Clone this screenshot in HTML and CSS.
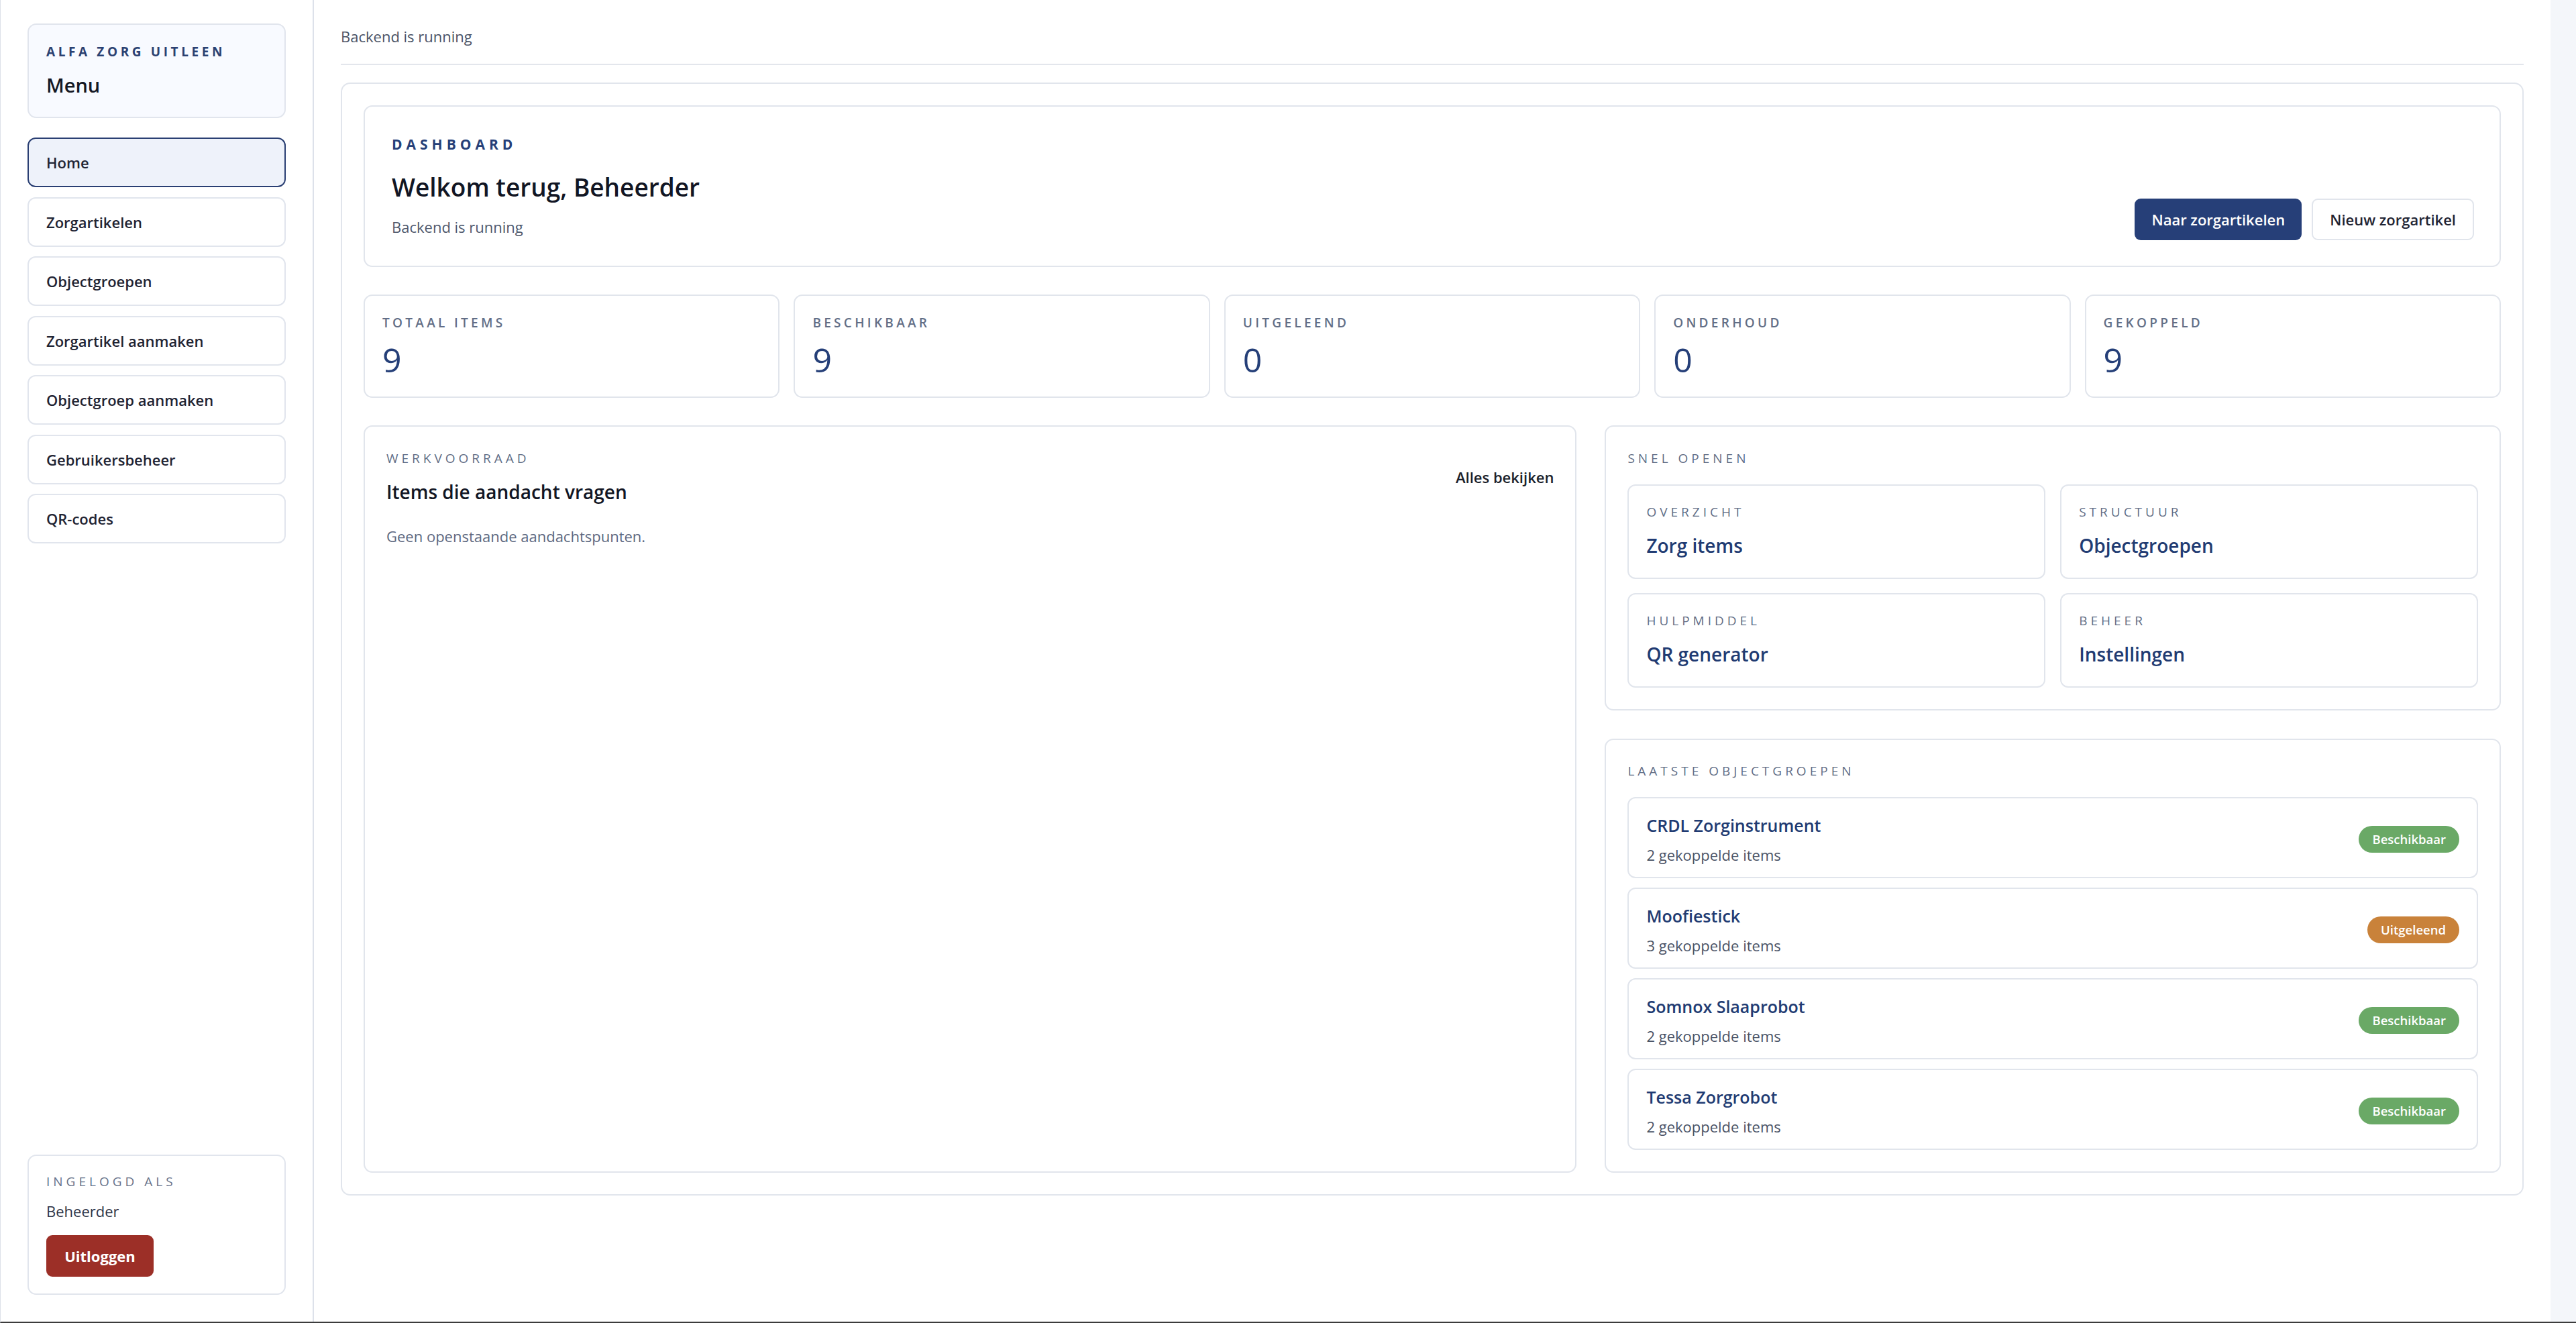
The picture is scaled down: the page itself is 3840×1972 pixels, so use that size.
FILE: index.html
```html
<!DOCTYPE html>
<html lang="nl">
<head>
    <meta charset="UTF-8">
    <meta name="viewport" content="width=device-width, initial-scale=1.0">
    <title>Alfa Zorg Uitleen - Dashboard</title>
    <link rel="stylesheet" href="styles.css">
</head>
<body>
    <div class="app">
        <aside class="sidebar">
            <div class="brand">
                <div class="brand-label">ALFA ZORG UITLEEN</div>
                <div class="brand-title">Menu</div>
            </div>

            <nav class="nav">
                <a class="nav-item active" href="#">Home</a>
                <a class="nav-item" href="#">Zorgartikelen</a>
                <a class="nav-item" href="#">Objectgroepen</a>
                <a class="nav-item" href="#">Zorgartikel aanmaken</a>
                <a class="nav-item" href="#">Objectgroep aanmaken</a>
                <a class="nav-item" href="#">Gebruikersbeheer</a>
                <a class="nav-item" href="#">QR-codes</a>
            </nav>

            <div class="user-box">
                <div class="user-label">INGELOGD ALS</div>
                <div class="user-name">Beheerder</div>
                <button class="btn-logout">Uitloggen</button>
            </div>
        </aside>

        <main class="main">
            <div class="topbar">Backend is running</div>

            <div class="panel">
                <section class="hero card">
                    <div class="hero-text">
                        <div class="eyebrow">DASHBOARD</div>
                        <h1>Welkom terug, Beheerder</h1>
                        <p class="muted">Backend is running</p>
                    </div>
                    <div class="hero-actions">
                        <button class="btn btn-primary">Naar zorgartikelen</button>
                        <button class="btn btn-light">Nieuw zorgartikel</button>
                    </div>
                </section>

                <section class="stats">
                    <div class="stat card">
                        <div class="label">TOTAAL ITEMS</div>
                        <div class="stat-value">9</div>
                    </div>
                    <div class="stat card">
                        <div class="label">BESCHIKBAAR</div>
                        <div class="stat-value">9</div>
                    </div>
                    <div class="stat card">
                        <div class="label">UITGELEEND</div>
                        <div class="stat-value">0</div>
                    </div>
                    <div class="stat card">
                        <div class="label">ONDERHOUD</div>
                        <div class="stat-value">0</div>
                    </div>
                    <div class="stat card">
                        <div class="label">GEKOPPELD</div>
                        <div class="stat-value">9</div>
                    </div>
                </section>

                <section class="lower">
                    <div class="work card">
                        <div class="work-head">
                            <div>
                                <div class="label">WERKVOORRAAD</div>
                                <h2>Items die aandacht vragen</h2>
                            </div>
                            <a class="link" href="#">Alles bekijken</a>
                        </div>
                        <p class="muted empty">Geen openstaande aandachtspunten.</p>
                    </div>

                    <div class="side-col">
                        <div class="quick card">
                            <div class="label">SNEL OPENEN</div>
                            <div class="quick-grid">
                                <a class="quick-item" href="#">
                                    <div class="label">OVERZICHT</div>
                                    <div class="quick-title">Zorg items</div>
                                </a>
                                <a class="quick-item" href="#">
                                    <div class="label">STRUCTUUR</div>
                                    <div class="quick-title">Objectgroepen</div>
                                </a>
                                <a class="quick-item" href="#">
                                    <div class="label">HULPMIDDEL</div>
                                    <div class="quick-title">QR generator</div>
                                </a>
                                <a class="quick-item" href="#">
                                    <div class="label">BEHEER</div>
                                    <div class="quick-title">Instellingen</div>
                                </a>
                            </div>
                        </div>

                        <div class="groups card">
                            <div class="label">LAATSTE OBJECTGROEPEN</div>
                            <div class="group-list" id="group-list"></div>
                        </div>
                    </div>
                </section>
            </div>
        </main>

        <div class="scroll-track"></div>
    </div>

    <script>
        const groups = [
            { name: "CRDL Zorginstrument", items: 2, status: "Beschikbaar" },
            { name: "Moofiestick", items: 3, status: "Uitgeleend" },
            { name: "Somnox Slaaprobot", items: 2, status: "Beschikbaar" },
            { name: "Tessa Zorgrobot", items: 2, status: "Beschikbaar" }
        ]

        const renderGroups = () => {
            const list = document.getElementById("group-list")
            list.innerHTML = ""
            groups.forEach(group => {
                let row = document.createElement("div")
                row.classList.add("group-item")
                let badgeClass = group.status === "Uitgeleend" ? "badge-out" : "badge-ok"
                row.innerHTML = `
                    <div>
                        <div class="group-name">${group.name}</div>
                        <div class="group-count">${group.items} gekoppelde items</div>
                    </div>
                    <span class="badge ${badgeClass}">${group.status}</span>
                `
                list.appendChild(row)
            })
        }

        renderGroups()
    </script>
</body>
</html>
```

FILE: styles.css
```css
* {
  box-sizing: border-box;
}
body {
  margin: 0;
  font-family: "Open Sans", "Noto Sans", sans-serif;
  color: #1b1f2b;
  background-color: #fff;
  overflow: hidden;
}
a {
  color: inherit;
  text-decoration: none;
}
h1, h2, p {
  margin: 0;
}
button {
  font-family: inherit;
  cursor: pointer;
}

.app {
  display: flex;
  height: 100vh;
  border-left: 1px solid #dde1e8;
  border-bottom: 2px solid #3c3c3c;
}

/* sidebar */
.sidebar {
  width: 467px;
  flex-shrink: 0;
  display: flex;
  flex-direction: column;
  padding: 35px 40px 40px;
  border-right: 2px solid #dde1ea;
}
.brand {
  background-color: #f8faff;
  border: 2px solid #e1e5ed;
  border-radius: 13px;
  padding: 26px 26px 27px;
}
.brand-label {
  font-size: 19px;
  line-height: 28px;
  font-weight: 700;
  letter-spacing: 4.6px;
  color: #2b4171;
}
.brand-title {
  margin-top: 16px;
  font-size: 29px;
  line-height: 40px;
  font-weight: 600;
  color: #141824;
}
.nav {
  display: flex;
  flex-direction: column;
  gap: 14.5px;
  margin-top: 29px;
}
.nav-item {
  display: block;
  padding: 20px 26px;
  font-size: 22px;
  line-height: 30px;
  font-weight: 600;
  color: #1f2433;
  border: 2px solid #e1e5ed;
  border-radius: 12px;
  background-color: #fff;
}
.nav-item.active {
  background-color: #eef2fa;
  border-color: #2a3f73;
}
.user-box {
  margin-top: auto;
  border: 2px solid #e1e5ed;
  border-radius: 13px;
  padding: 25px 26px 25px;
}
.user-label {
  font-size: 19px;
  line-height: 26px;
  letter-spacing: 5px;
  color: #66728a;
}
.user-name {
  margin-top: 16px;
  font-size: 22px;
  line-height: 30px;
  color: #2f3548;
}
.btn-logout {
  margin-top: 21px;
  height: 62px;
  width: 160px;
  border: none;
  border-radius: 9px;
  background-color: #9c2f27;
  color: #fff;
  font-size: 22px;
  font-weight: 700;
}

/* main area */
.main {
  flex: 1;
  min-width: 0;
  padding: 0 40px;
}
.topbar {
  padding: 40px 0 27px;
  font-size: 22px;
  line-height: 28px;
  color: #4a5366;
  border-bottom: 2px solid #e3e6ec;
}
.panel {
  margin-top: 26px;
  border: 2px solid #e1e5ec;
  border-radius: 14px;
  padding: 32px;
  display: flex;
  flex-direction: column;
  gap: 41px;
}
.card {
  border: 2px solid #e1e5ec;
  border-radius: 13px;
  background-color: #fff;
}
.label {
  font-size: 19px;
  line-height: 26px;
  font-weight: 500;
  letter-spacing: 5px;
  color: #626e86;
}
.muted {
  font-size: 22px;
  line-height: 28px;
  color: #4e586c;
}

.hero {
  display: flex;
  justify-content: space-between;
  align-items: flex-end;
  padding: 41px 38px 38px 40px;
}
.hero-text {
  padding-bottom: 6px;
}
.eyebrow {
  font-size: 21px;
  line-height: 30px;
  font-weight: 700;
  letter-spacing: 6px;
  color: #263f78;
}
.hero h1 {
  margin-top: 25px;
  font-size: 37px;
  line-height: 48px;
  font-weight: 600;
  color: #121624;
}
.hero .muted {
  margin-top: 21px;
}
.hero-actions {
  display: flex;
  gap: 15px;
}
.btn {
  height: 62px;
  padding: 0 25px;
  font-size: 22px;
  font-weight: 600;
  border-radius: 9px;
}
.btn-primary {
  background-color: #263f78;
  border: none;
  color: #fff;
}
.btn-light {
  background-color: #fff;
  border: 2px solid #e1e5ec;
  color: #1f2433;
}

.stats {
  display: grid;
  grid-template-columns: repeat(5, 1fr);
  gap: 21px;
}
.stat {
  padding: 27px 26px 25px;
}
.stat .label {
  font-weight: 600;
  letter-spacing: 4.3px;
}
.stat-value {
  margin-top: 12px;
  font-size: 50px;
  line-height: 60px;
  font-weight: 500;
  color: #253f78;
}

.lower {
  display: grid;
  grid-template-columns: 1.354fr 1fr;
  gap: 42px;
  align-items: stretch;
}
.work {
  padding: 34px 32px;
}
.work-head {
  display: flex;
  justify-content: space-between;
  align-items: center;
}
.work h2 {
  margin-top: 19px;
  font-size: 28px;
  line-height: 36px;
  font-weight: 600;
  color: #121624;
}
.link {
  font-size: 22px;
  line-height: 30px;
  font-weight: 600;
  color: #1b1f2b;
}
.empty {
  margin-top: 34px;
  color: #5d6880;
}

.side-col {
  display: flex;
  flex-direction: column;
  gap: 42px;
}
.quick {
  padding: 34px 32px 32px;
}
.quick-grid {
  margin-top: 26px;
  display: grid;
  grid-template-columns: 1fr 1fr;
  column-gap: 22px;
  row-gap: 21px;
}
.quick-item {
  display: block;
  border: 2px solid #e1e5ec;
  border-radius: 12px;
  padding: 26px 26px 30px;
}
.quick-title {
  margin-top: 19px;
  font-size: 28px;
  line-height: 36px;
  font-weight: 600;
  color: #213b72;
}

.groups {
  padding: 33px 32px 32px;
}
.group-list {
  margin-top: 26px;
  display: flex;
  flex-direction: column;
  gap: 14px;
}
.group-item {
  display: flex;
  justify-content: space-between;
  align-items: center;
  border: 2px solid #e1e5ec;
  border-radius: 12px;
  padding: 24px 26px 19px;
}
.group-name {
  font-size: 25px;
  line-height: 32px;
  font-weight: 600;
  color: #213b72;
}
.group-count {
  margin-top: 14px;
  font-size: 22px;
  line-height: 28px;
  color: #4a5366;
}
.badge {
  padding: 6px 20px;
  border-radius: 20px;
  font-size: 18.5px;
  line-height: 28px;
  font-weight: 600;
  color: #fff;
}
.badge-ok {
  background-color: #6aa966;
}
.badge-out {
  background-color: #c9823a;
}

.scroll-track {
  width: 38px;
  flex-shrink: 0;
  background-color: #f4f6fa;
}
```
